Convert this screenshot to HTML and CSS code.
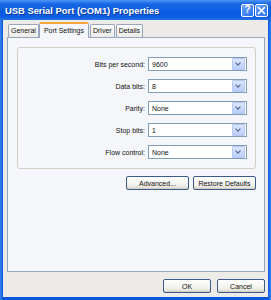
FILE: index.html
```html
<!DOCTYPE html>
<html lang="en">
<head>
  <meta charset="UTF-8" />
  <title>USB Serial Port (COM1) Properties</title>
  <link rel="stylesheet" href="styles.css">
</head>
<body>
  <div class="window">
    <div class="titlebar">
      <span class="title">USB Serial Port (COM1) Properties</span>
      <span class="capbtn">?</span>
      <span class="capbtn">
        <svg width="9" height="9" viewBox="0 0 9 9"><path d="M1 1 L8 8 M8 1 L1 8" stroke="#fff" stroke-width="1.6"/></svg>
      </span>
    </div>

    <div class="client">
      <div class="tabs">
        <div class="tab">General</div>
        <div class="tab active">Port Settings</div>
        <div class="tab">Driver</div>
        <div class="tab">Details</div>
      </div>

      <div class="panel">
        <div class="group">
          <div class="row">
            <label>Bits per second:</label>
            <div class="combo"><span>9600</span><i class="drop"></i></div>
          </div>
          <div class="row">
            <label>Data bits:</label>
            <div class="combo"><span>8</span><i class="drop"></i></div>
          </div>
          <div class="row">
            <label>Parity:</label>
            <div class="combo"><span>None</span><i class="drop"></i></div>
          </div>
          <div class="row">
            <label>Stop bits:</label>
            <div class="combo"><span>1</span><i class="drop"></i></div>
          </div>
          <div class="row">
            <label>Flow control:</label>
            <div class="combo"><span>None</span><i class="drop"></i></div>
          </div>
        </div>

        <div class="actions">
          <button class="btn">Advanced...</button>
          <button class="btn">Restore Defaults</button>
        </div>
      </div>

      <div class="footer">
        <button class="btn small">OK</button>
        <button class="btn small">Cancel</button>
      </div>
    </div>
  </div>
</body>
</html>
```

FILE: styles.css
```css
body { margin: 0; font-family: "Liberation Sans", Arial, sans-serif; font-size: 7px; color: #111; }

.window { width: 271px; height: 300px; box-sizing: border-box; display: flex; flex-direction: column;
  background: linear-gradient(90deg, #3a86f0, #0a56de 3px, #0a56de 268px, #3a86f0); }

.titlebar { height: 20px; display: flex; align-items: center; padding: 0 3px 0 5px; gap: 1px;
  background: linear-gradient(#4a95f8, #1766e6 4px, #0a5ae0 12px, #0d5fe2 17px, #2a70e6); }
.title { flex: 1; color: #fff; font-weight: bold; font-size: 9.4px; text-shadow: 1px 1px 0 #0a3aa0; }
.capbtn { width: 13px; height: 13px; box-sizing: border-box; border: 1px solid #fff; border-radius: 2px;
  background: linear-gradient(135deg, #6aa4f8, #2a6ef0); color: #fff; font-weight: bold; font-size: 10px;
  display: flex; align-items: center; justify-content: center; line-height: 1; }

.client { flex: 1; margin: 0 3px 3px; background: #edebe8; display: flex; flex-direction: column; }

.tabs { display: flex; padding: 3px 0 0 5px; height: 17px; box-sizing: border-box; align-items: flex-end; }
.tab { height: 12px; padding: 0 2px; border: 1px solid #98a7bd; border-bottom: none; border-radius: 2px 2px 0 0;
  background: linear-gradient(#fcfcfe, #ecebe6); line-height: 12px; margin-right: 1px; }
.tab.active { height: 14px; background: #f5f6fa; border-top: 2px solid #f5a73a; line-height: 13px;
  margin: 0 1px -1px -1px; padding: 0 4px; position: relative; }

.panel { margin-left: 4px; width: 258px; height: 235px; box-sizing: border-box; border: 1px solid #98a7bd;
  background: #f5f6fa; padding: 9px 8px 0 9px; }

.group { border: 1px solid #d0d0c4; border-radius: 3px; padding: 9px 8px 9px 0;
  display: flex; flex-direction: column; gap: 8px; }
.row { display: flex; align-items: center; height: 14px; }
.row label { flex: 1; text-align: right; padding-right: 3px; }

.combo { width: 99px; height: 14px; box-sizing: border-box; border: 1px solid #7f9db9; background: #fff;
  display: flex; align-items: center; padding: 0 1px 0 3px; }
.combo span { flex: 1; }
.drop { width: 11px; height: 10px; border: 1px solid #b6c8f0; border-radius: 1px;
  background: linear-gradient(#dbe6fd, #b9cdf9); position: relative; }
.drop::after { content: ""; position: absolute; left: 3px; top: 2px; width: 3px; height: 3px;
  border-right: 1.3px solid #4d6185; border-bottom: 1.3px solid #4d6185; transform: rotate(45deg); }

.actions { display: flex; justify-content: flex-end; gap: 4px; margin-top: 7px; }
.btn { width: 63px; height: 14px; box-sizing: border-box; border: 1px solid #3c5a8c; border-radius: 2px;
  background: linear-gradient(#ffffff, #f0f0ea 70%, #d8d6cc); font: inherit; color: inherit; padding: 0;
  box-shadow: inset 0 -1px 0 #d6d0c2; }

.footer { display: flex; justify-content: flex-end; gap: 6px; padding: 7px 3px 0 0; }
.btn.small { width: 48px; }
```
